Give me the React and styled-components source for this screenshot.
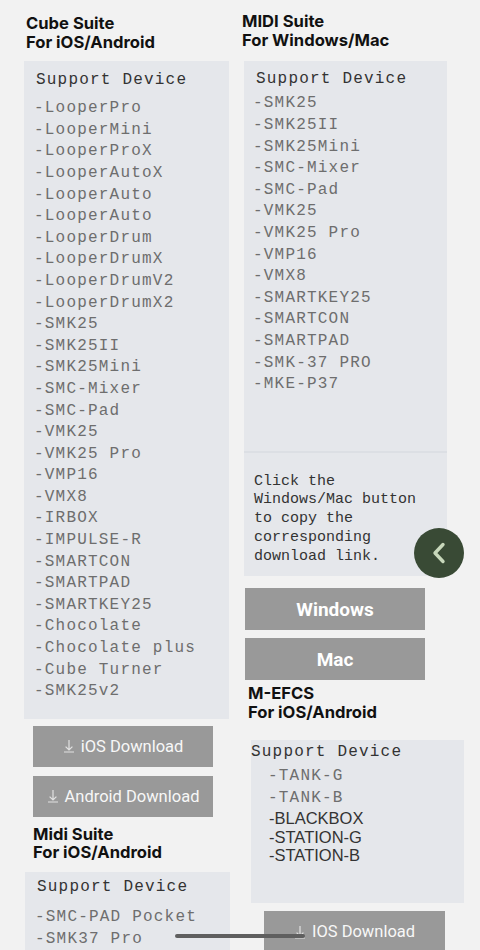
import React from "react";
import styled, { createGlobalStyle } from "styled-components";

const cubeDevices = [
  "LooperPro", "LooperMini", "LooperProX", "LooperAutoX", "LooperAuto",
  "LooperAuto", "LooperDrum", "LooperDrumX", "LooperDrumV2", "LooperDrumX2",
  "SMK25", "SMK25II", "SMK25Mini", "SMC-Mixer", "SMC-Pad", "VMK25",
  "VMK25 Pro", "VMP16", "VMX8", "IRBOX", "IMPULSE-R", "SMARTCON",
  "SMARTPAD", "SMARTKEY25", "Chocolate", "Chocolate plus", "Cube Turner",
  "SMK25v2",
];

const midiDevices = [
  "SMK25", "SMK25II", "SMK25Mini", "SMC-Mixer", "SMC-Pad", "VMK25",
  "VMK25 Pro", "VMP16", "VMX8", "SMARTKEY25", "SMARTCON", "SMARTPAD",
  "SMK-37 PRO", "MKE-P37",
];

const GlobalStyle = createGlobalStyle`
  html, body {
    margin: 0;
    padding: 0;
    background: #f2f2f2;
  }
  body {
    font-family: Inter, "Liberation Sans", sans-serif;
    overflow: hidden;
  }
`;

const Page = styled.div`
  display: flex;
  align-items: flex-start;
  width: 480px;
  height: 950px;
  overflow: hidden;
`;

const Column = styled.div`
  display: flex;
  flex-direction: column;
  align-items: flex-start;
  margin-left: ${(p) => p.$left}px;
  width: ${(p) => p.$width}px;
`;

const Title = styled.h2`
  margin: ${(p) => p.$top || 0}px 0 ${(p) => p.$bottom || 0}px ${(p) => p.$indent || 0}px;
  font-family: Inter, "Liberation Sans", sans-serif;
  font-size: 16.6px;
  line-height: 18.5px;
  font-weight: 700;
  color: #111;
`;

const Card = styled.div`
  box-sizing: border-box;
  margin-left: ${(p) => p.$indent || 0}px;
  width: ${(p) => p.$width}px;
  background: #e5e7eb;
  padding: ${(p) => p.$pad};
`;

const CardSection = styled.div`
  padding: ${(p) => p.$pad};
  & + & {
    border-top: 2px solid #dcdfe4;
  }
`;

const Heading = styled.div`
  font-family: "Liberation Mono", "DejaVu Sans Mono", monospace;
  font-size: 16px;
  line-height: ${(p) => p.$lh || 21.6}px;
  letter-spacing: 1.2px;
  color: #333;
  margin: 0 0 ${(p) => p.$gap || 0}px ${(p) => p.$indent || 0}px;
  white-space: pre;
`;

const Item = styled.div`
  font-family: "Liberation Mono", "DejaVu Sans Mono", monospace;
  font-size: 16px;
  line-height: 21.6px;
  letter-spacing: 1.2px;
  color: #6e6e6e;
  padding-left: ${(p) => p.$indent || 0}px;
  white-space: pre;
`;

const PlainItem = styled.div`
  font-family: "Liberation Sans", Arial, sans-serif;
  font-size: 16.5px;
  line-height: 18.5px;
  color: #333;
  padding-left: ${(p) => p.$indent || 0}px;
`;

const Note = styled.p`
  margin: 0;
  font-family: "Liberation Mono", "DejaVu Sans Mono", monospace;
  font-size: 15px;
  line-height: 18.75px;
  color: #333;
`;

const ButtonStack = styled.div`
  display: flex;
  flex-direction: column;
  gap: ${(p) => p.$gap}px;
  margin: ${(p) => p.$top}px 0 0 ${(p) => p.$indent}px;
`;

const Button = styled.button`
  display: flex;
  align-items: center;
  justify-content: center;
  gap: 6px;
  width: ${(p) => p.$width || 180}px;
  height: 41px;
  border: none;
  padding: 0;
  background: #999999;
  color: #f7f7f7;
  font-family: Roboto, "Liberation Sans", sans-serif;
  font-size: 16.5px;
  font-weight: 400;
  cursor: pointer;
`;

const BigButton = styled(Button)`
  height: 42px;
  font-size: 19px;
  font-weight: 700;
  color: #fff;
`;

const DownIcon = styled.svg`
  width: 12px;
  height: 14px;
  flex: none;
`;

const FloatButton = styled.button`
  position: fixed;
  top: 528px;
  right: 16px;
  width: 50px;
  height: 50px;
  border-radius: 50%;
  border: none;
  padding: 0;
  background: #394a35;
  display: flex;
  align-items: center;
  justify-content: center;
`;

const HomeBar = styled.div`
  position: fixed;
  left: 175px;
  top: 934px;
  width: 130px;
  height: 4px;
  border-radius: 2px;
  background: #5f5f5f;
`;

function Download() {
  return (
    <DownIcon viewBox="0 0 12 14" fill="none" stroke="#e2e2e2" strokeWidth="1.2">
      <path d="M6 1v10M2.6 7.6 6 11l3.4-3.4M1 13h10" />
    </DownIcon>
  );
}

export default function App() {
  return (
    <>
      <GlobalStyle />
      <Page>
        <Column $left={24} $width={206}>
          <Title $top={14} $bottom={10} $indent={2}>
            Cube Suite
            <br />
            For iOS/Android
          </Title>
          <Card $width={205} $pad="9px 0 16px 10px">
            <Heading $gap={6.6} $indent={2}>Support Device</Heading>
            {cubeDevices.map((d, i) => (
              <Item key={i}>-{d}</Item>
            ))}
          </Card>
          <ButtonStack $gap={9} $top={7} $indent={9}>
            <Button>
              <Download />
              iOS Download
            </Button>
            <Button>
              <Download />
              Android Download
            </Button>
          </ButtonStack>
          <Title $top={8} $bottom={10} $indent={9}>
            Midi Suite
            <br />
            For iOS/Android
          </Title>
          <Card $indent={1} $width={205} $pad="5px 0 10px 10px">
            <Heading $gap={8.6} $indent={2}>Support Device</Heading>
            <Item>-SMC-PAD Pocket</Item>
            <Item>-SMK37 Pro</Item>
          </Card>
        </Column>

        <Column $left={12} $width={224}>
          <Title $top={12} $bottom={12}>
            MIDI Suite
            <br />
            For Windows/Mac
          </Title>
          <Card $indent={2} $width={203} $pad="0">
            <CardSection $pad="8px 0 55px 9px">
              <Heading $gap={2.8} $indent={3}>Support Device</Heading>
              {midiDevices.map((d, i) => (
                <Item key={i}>-{d}</Item>
              ))}
            </CardSection>
            <CardSection $pad="20px 10px 9.6px 10px">
              <Note>
                Click the Windows/Mac button to copy the corresponding download link.
              </Note>
            </CardSection>
          </Card>
          <ButtonStack $gap={8} $top={12} $indent={3}>
            <BigButton>Windows</BigButton>
            <BigButton>Mac</BigButton>
          </ButtonStack>
          <Title $top={4} $bottom={19} $indent={6}>
            M-EFCS
            <br />
            For iOS/Android
          </Title>
          <Card $indent={9} $width={213} $pad="3px 0 38.7px 0">
            <Heading $lh={18} $gap={5}>Support Device</Heading>
            <Item $indent={17}>-TANK-G</Item>
            <Item $indent={17}>-TANK-B</Item>
            <PlainItem $indent={18}>-BLACKBOX</PlainItem>
            <PlainItem $indent={18}>-STATION-G</PlainItem>
            <PlainItem $indent={18}>-STATION-B</PlainItem>
          </Card>
          <ButtonStack $gap={0} $top={8} $indent={22}>
            <Button $width={181}>
              <Download />
              IOS Download
            </Button>
          </ButtonStack>
        </Column>
      </Page>
      <FloatButton aria-label="Back">
        <svg width="24" height="24" viewBox="0 0 24 24" fill="none" stroke="#c8d8bb" strokeWidth="3.4" strokeLinecap="round" strokeLinejoin="round">
          <polyline points="16,3.5 8,12 16,20.5" />
        </svg>
      </FloatButton>
      <HomeBar />
    </>
  );
}
